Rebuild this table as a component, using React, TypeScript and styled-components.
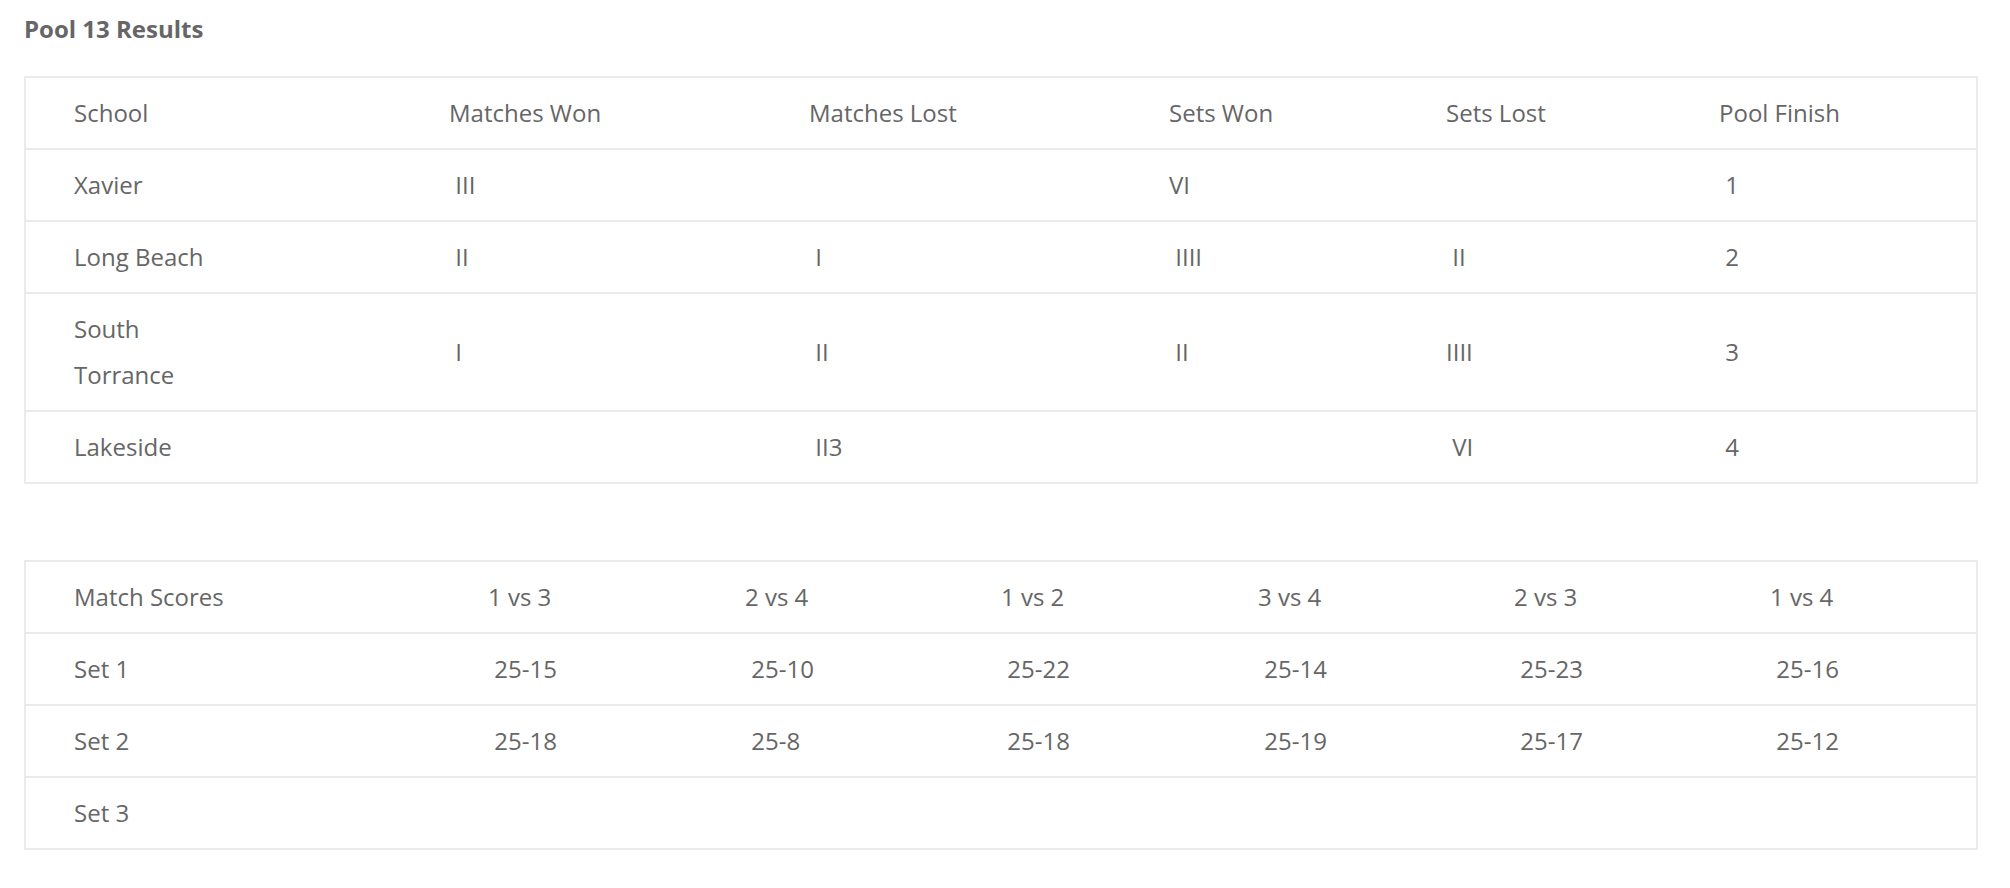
import styled, { createGlobalStyle } from "styled-components";

const GlobalStyle = createGlobalStyle`
  html, body {
    margin: 0;
    padding: 0;
    background: #ffffff;
  }
  body {
    font-family: "Open Sans", "Liberation Sans", sans-serif;
    color: #666666;
  }
`;

const standingsCols = [375, 360, 360, 277, 273, 305];
const scoreCols = [414, 257, 256, 257, 256, 256, 254];

const standingsHeader = [
  "School",
  "Matches Won",
  "Matches Lost",
  "Sets Won",
  "Sets Lost",
  "Pool Finish",
];

// leading spaces are part of the original data
const standings: string[][] = [
  ["Xavier", " III", "", "VI", "", " 1"],
  ["Long Beach", " II", " I", " IIII", " II", " 2"],
  ["South\nTorrance", " I", " II", " II", "IIII", " 3"],
  ["Lakeside", "", " II3", "", " VI", " 4"],
];

const scoresHeader = [
  "Match Scores",
  "1 vs 3",
  "2 vs 4",
  "1 vs 2",
  "3 vs 4",
  "2 vs 3",
  "1 vs 4",
];

const scores: string[][] = [
  ["Set 1", " 25-15", " 25-10", " 25-22", " 25-14", " 25-23", " 25-16"],
  ["Set 2", " 25-18", " 25-8", " 25-18", " 25-19", " 25-17", " 25-12"],
  ["Set 3", "", "", "", "", "", ""],
];

const ResultsTable = ({
  widths,
  header,
  rows,
}: {
  widths: number[];
  header: string[];
  rows: string[][];
}) => (
  <Table>
    <colgroup>
      {widths.map((w, i) => (
        <col key={i} style={{ width: w }} />
      ))}
    </colgroup>
    <tbody>
      <Row>
        {header.map((h) => (
          <Cell key={h}>{h}</Cell>
        ))}
      </Row>
      {rows.map((row, r) => (
        <Row key={r}>
          {row.map((value, c) => (
            <Cell key={c}>{value}</Cell>
          ))}
        </Row>
      ))}
    </tbody>
  </Table>
);

const App = () => {
  return (
    <>
      <GlobalStyle />
      <Page>
        <Title>Pool 13 Results</Title>
        <ResultsTable
          widths={standingsCols}
          header={standingsHeader}
          rows={standings}
        />
        <ResultsTable widths={scoreCols} header={scoresHeader} rows={scores} />
      </Page>
    </>
  );
};

const Page = styled.div`
  display: flex;
  flex-direction: column;
  gap: 76px;
  padding: 13px 0 20px 24px;
  width: 1954px;
`;

const Title = styled.h3`
  margin: 0 0 -45px 0;
  font-size: 24px;
  line-height: 32px;
  font-weight: 700;
  color: #666666;
`;

const Table = styled.table`
  width: 1954px;
  table-layout: fixed;
  border-collapse: separate;
  border-spacing: 0;
  border: 2px solid #ebebeb;
`;

const Row = styled.tr`
  & + & > td {
    border-top: 2px solid #ebebeb;
  }
`;

const Cell = styled.td`
  padding: 12px 0 12px 48px;
  font-size: 24px;
  line-height: 46px;
  color: #666666;
  white-space: pre-wrap;
  vertical-align: middle;
  text-align: left;
`;

export default App;
